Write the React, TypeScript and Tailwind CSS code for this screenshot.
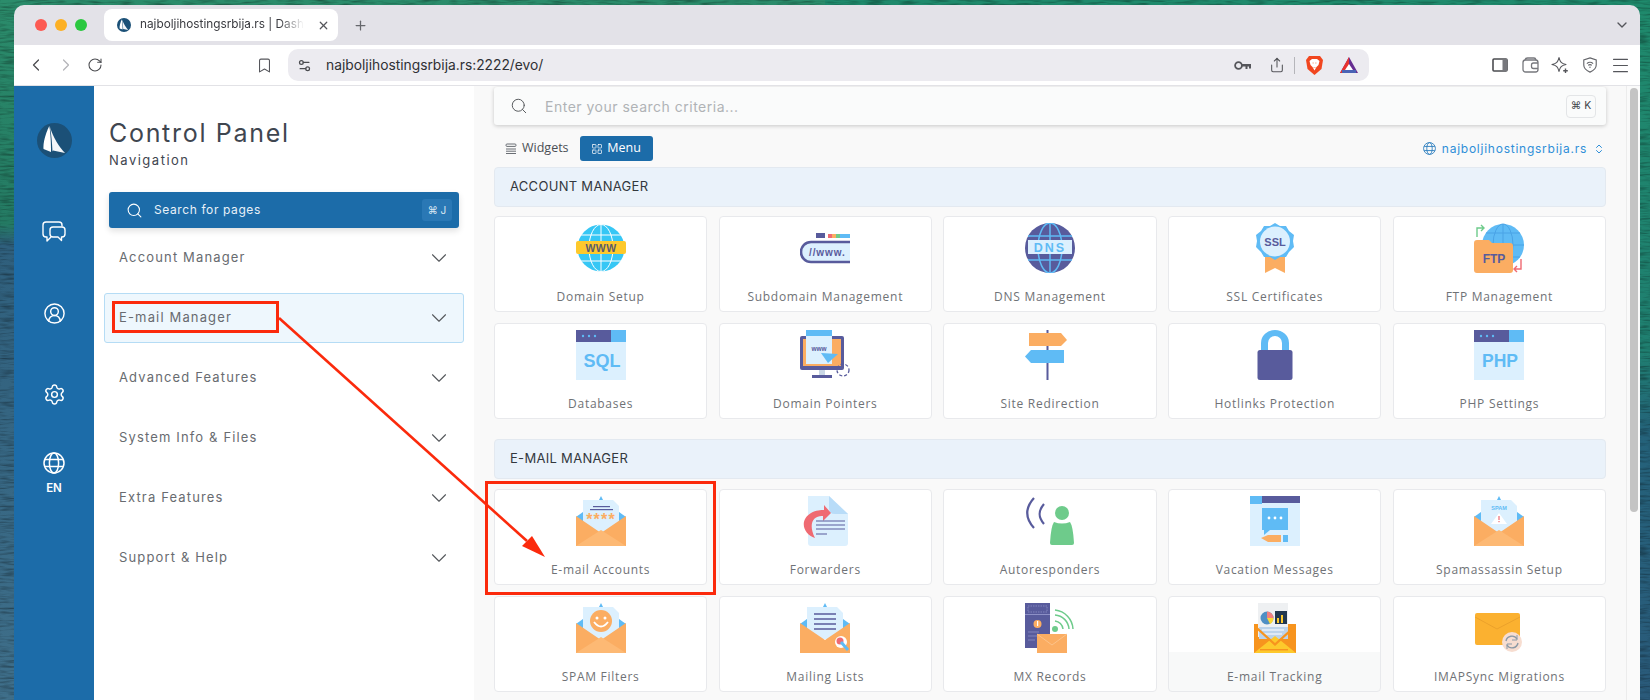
import type { ReactNode } from "react";
import {
  Bookmark,
  ChevronDown,
  ChevronLeft,
  ChevronRight,
  ChevronsUpDown,
  CircleUserRound,
  LayoutGrid,
  Menu,
  Plus,
  RotateCw,
  Search,
  Settings,
  Settings2,
  Share,
  X,
} from "lucide-react";

const MONT = "font-['Inter','Noto_Sans',sans-serif]";
const OPEN = "font-['Open_Sans','Noto_Sans',sans-serif]";

const BLUE = "#5fbbf5";
const PURPLE = "#585b9c";
const ORANGE = "#fbad62";
const PALE = "#dcf0fe";

function Svg({ children, w = 50 }: { children: ReactNode; w?: number }) {
  return (
    <svg width={w} height={50} viewBox={`0 0 ${w} 50`} className="block">
      {children}
    </svg>
  );
}

function SailLogo({ size }: { size: number }) {
  return (
    <svg width={size} height={size} viewBox="0 0 35 35" className="block">
      <circle cx="17.5" cy="17.5" r="17.5" fill="#1b5077" />
      <path d="M12.3 3 C8 12 6 20 6.5 26 L14 29 C14 20 13.5 10 12.3 3Z" fill="#fff" />
      <path d="M13 4 C16 14 22 24 28 30 L16 27.5 L15.5 28.5 C15 20 14.5 12 13 4Z" fill="#f4f6f9" />
    </svg>
  );
}

function WorldIcon({ size, className }: { size: number; className?: string }) {
  return (
    <svg width={size} height={size} viewBox="0 0 22 22" fill="none" stroke="currentColor" strokeWidth="1.5" className={className}>
      <circle cx="11" cy="11" r="10" />
      <ellipse cx="11" cy="11" rx="4.6" ry="10" />
      <path d="M2 7.5 H20 M2 14.5 H20" />
    </svg>
  );
}

function ChatIcon() {
  return (
    <svg width="24" height="22" viewBox="0 0 24 22" fill="none" stroke="#fff" strokeWidth="1.4" strokeLinejoin="round" className="mt-[63px]">
      <path d="M20 5.5 V4 Q20 1 17 1 H4 Q1 1 1 4 V13 Q1 16 4 16 H5 V20 L9 16" />
      <path d="M11 6 H20 Q23 6 23 9 V13 Q23 16 20 16 H19.5 V19.5 L16 16 H11 Q8 16 8 13 V9 Q8 6 11 6Z" />
    </svg>
  );
}

function Envelope({ children, flap = ORANGE }: { children: ReactNode; flap?: string }) {
  return (
    <Svg>
      <path d="M0 21 L25 3 L50 21 L50 30 L0 30Z" fill={BLUE} />
      <path d="M7 4 L37 4 L43 10 L43 36 L7 36Z" fill={PALE} />
      <path d="M23 4 L25 0 L27 4Z" fill={BLUE} />
      {children}
      <path d="M0 20 L25 37 L50 20 L50 50 L0 50Z" fill={flap} />
      <path d="M0 50 L25 34 L50 50Z" fill="#fdb974" />
    </Svg>
  );
}

function WindowIcon({ label, size }: { label: string; size: number }) {
  return (
    <Svg>
      <rect y="0" width="50" height="50" fill={PALE} />
      <rect y="0" width="35" height="12" fill={PURPLE} />
      <rect x="35" y="0" width="15" height="12" fill={BLUE} />
      <circle cx="7" cy="6" r="1.2" fill={BLUE} />
      <circle cx="13" cy="6" r="1.2" fill={BLUE} />
      <circle cx="19" cy="6" r="1.2" fill={BLUE} />
      <text x="26" y="37" textAnchor="middle" fontSize={size} fontWeight="700" fill={BLUE} fontFamily="'Liberation Sans', sans-serif">
        {label}
      </text>
    </Svg>
  );
}

const DomainIcon = () => (
  <Svg>
    <circle cx="25" cy="25" r="23.5" fill="#36c7f5" />
    <path d="M5 12 H45 M5 38 H45 M25 2 V48" stroke="#fff" strokeWidth="1" />
    <ellipse cx="25" cy="25" rx="12" ry="23.5" fill="none" stroke="#fff" strokeWidth="1" />
    <rect x="0" y="18" width="50" height="13" rx="2" fill="#fdc92c" />
    <text x="25" y="28.5" textAnchor="middle" fontSize="10.5" fontWeight="700" fill="#585b6c" letterSpacing="0.5" fontFamily="'Liberation Sans', sans-serif">WWW</text>
  </Svg>
);

const SubdomainIcon = () => (
  <Svg>
    <rect x="16" y="10" width="9" height="5" fill={PURPLE} />
    <rect x="28" y="11" width="4" height="4" fill="#ef6a72" />
    <rect x="32" y="11" width="4" height="4" fill={ORANGE} />
    <rect x="36" y="11" width="4" height="4" fill="#6ecb8b" />
    <rect x="40" y="11" width="10" height="4" fill={BLUE} />
    <path d="M50 19 H11 A10 10 0 0 0 11 39 H50" fill={PALE} stroke={PURPLE} strokeWidth="2.6" />
    <text x="9" y="33" fontSize="10" fontWeight="700" fill={PURPLE} letterSpacing="0.9" fontFamily="'Liberation Sans', sans-serif">//www.</text>
  </Svg>
);

const DnsIcon = () => (
  <Svg>
    <circle cx="25" cy="25" r="25" fill={PURPLE} />
    <path d="M3 13 H47 M3 37 H47 M25 1 V49" stroke={BLUE} strokeWidth="1.5" />
    <ellipse cx="25" cy="25" rx="12" ry="25" fill="none" stroke={BLUE} strokeWidth="1.5" />
    <rect x="3" y="17" width="44" height="14" fill={PALE} />
    <text x="25" y="29" textAnchor="middle" fontSize="12.5" fontWeight="700" fill={BLUE} letterSpacing="2" fontFamily="'Liberation Sans', sans-serif">DNS</text>
  </Svg>
);

const SslIcon = () => (
  <Svg>
    <path d="M15 32 H35 V50 L25 45 L15 50Z" fill={ORANGE} />
    <path d="M25 0 L30 3 L36 3 L39 8 L44 12 L43 18 L44 24 L39 29 L36 34 L30 34 L25 37 L20 34 L14 34 L11 29 L6 24 L7 18 L6 12 L11 8 L14 3 L20 3Z" fill={BLUE} />
    <circle cx="25" cy="18.5" r="15" fill={PALE} />
    <text x="25" y="23" textAnchor="middle" fontSize="11" fontWeight="700" fill={PURPLE} fontFamily="'Liberation Sans', sans-serif">SSL</text>
  </Svg>
);

const FtpIcon = () => (
  <Svg>
    <circle cx="29" cy="22" r="21" fill={BLUE} />
    <path d="M8 22 H50 M29 1 V43 M12 10 H46 M12 34 H46" stroke="#4aa3e6" strokeWidth="1" />
    <ellipse cx="29" cy="22" rx="10" ry="21" fill="none" stroke="#4aa3e6" strokeWidth="1" />
    <path d="M0 20 Q0 17 3 17 H15 L18 20 H36 Q39 20 39 23 V47 Q39 50 36 50 H3 Q0 50 0 47Z" fill={ORANGE} />
    <text x="20" y="40" textAnchor="middle" fontSize="12" fontWeight="700" fill={PURPLE} fontFamily="'Liberation Sans', sans-serif">FTP</text>
    <path d="M3 14 V5 H9 M7 2 L10 5 L7 8" fill="none" stroke="#6ecb8b" strokeWidth="1.4" />
    <path d="M47 36 V46 H41 M43 43 L40 46 L43 49" fill="none" stroke="#ef6a72" strokeWidth="1.4" />
  </Svg>
);

const PointersIcon = () => (
  <Svg>
    <rect x="0" y="6" width="44" height="34" rx="2" fill={PURPLE} />
    <rect x="3" y="9" width="38" height="27" fill={ORANGE} />
    <rect x="6" y="0" width="26" height="34" fill={PALE} />
    <rect x="6" y="0" width="26" height="6" fill={BLUE} />
    <text x="19" y="21" textAnchor="middle" fontSize="6.5" fontWeight="700" fill={PURPLE} fontFamily="'Liberation Sans', sans-serif">www</text>
    <path d="M21 23 L38 24 L28 33Z" fill={BLUE} />
    <rect x="19" y="40" width="6" height="5" fill="#c9d7e6" />
    <rect x="12" y="45" width="20" height="3" fill={PURPLE} />
    <circle cx="43" cy="40" r="6" fill="none" stroke={PURPLE} strokeWidth="1.3" strokeDasharray="3 2" />
  </Svg>
);

const SignIcon = () => (
  <Svg>
    <rect x="21.5" y="0" width="2" height="50" fill={PURPLE} />
    <path d="M4 3 H36 L42 10 L36 16 H4Z" fill={ORANGE} />
    <path d="M6 20 H39 V33 H6 L0 26.5Z" fill={BLUE} />
  </Svg>
);

const LockIcon = () => (
  <Svg>
    <path d="M11 22 V13 A14 13 0 0 1 39 13 V22 H32 V13 A7 7 0 0 0 18 13 V22Z" fill={BLUE} />
    <rect x="7.5" y="20" width="35" height="30" rx="2.5" fill={PURPLE} />
  </Svg>
);

const EmailAccountsIcon = () => (
  <Envelope>
    <rect x="17" y="10" width="17" height="1.2" fill={PURPLE} />
    <rect x="14" y="13" width="23" height="1.2" fill={PURPLE} />
    <text x="25" y="29" textAnchor="middle" fontSize="16" fontWeight="700" fill={ORANGE} letterSpacing="1.2" fontFamily="'Liberation Sans', sans-serif">****</text>
  </Envelope>
);

const ForwardersIcon = () => (
  <Svg w={48}>
    <path d="M7 0 H28 L47 18 V47 Q47 50 44 50 H10 Q7 50 7 47Z" fill={PALE} />
    <path d="M28 0 L47 18 H34 Q28 18 28 12Z" fill="#b8dcf8" />
    <path d="M14 42 C2 38 -2 24 10 17 C15 14 20 14 23 14 V9 L30 17 L22 25 V20 C14 19 6 26 14 42Z" fill="#ef6a72" />
    <path d="M15 25 H44 M15 29 H44 M15 33 H44 M15 38 H26" stroke={PURPLE} strokeWidth="1.2" />
  </Svg>
);

const AutoresponderIcon = () => (
  <Svg>
    <path d="M9 32 C0 22 0 12 9 2" fill="none" stroke={PURPLE} strokeWidth="2.2" />
    <path d="M19 28 C13 21 13 15 19 8" fill="none" stroke={PURPLE} strokeWidth="2.2" />
    <circle cx="37" cy="17" r="7" fill="#6ecb8b" />
    <path d="M29 26 Q37 29 45 26 Q48 30 49 47 Q49 49 47 49 H27 Q25 49 25 47 Q26 30 29 26Z" fill="#6ecb8b" />
  </Svg>
);

const VacationIcon = () => (
  <Svg>
    <rect width="50" height="50" fill={PALE} />
    <rect width="12" height="8" fill={BLUE} />
    <rect x="12" width="38" height="7" fill={PURPLE} />
    <rect x="12" y="12" width="26" height="22" fill={BLUE} />
    <path d="M14 34 H20 L14 39Z" fill={BLUE} />
    <circle cx="19" cy="22" r="1.4" fill="#fff" />
    <circle cx="25" cy="22" r="1.4" fill="#fff" />
    <circle cx="31" cy="22" r="1.4" fill="#fff" />
    <path d="M11 42 L18 39 H31 V46 H18Z" fill={ORANGE} />
    <rect x="33" y="39" width="5" height="7" fill={BLUE} />
  </Svg>
);

const SpamIcon = () => (
  <Envelope>
    <text x="25" y="14" textAnchor="middle" fontSize="5.5" fontWeight="700" fill={BLUE} fontFamily="'Liberation Sans', sans-serif">SPAM</text>
    <path d="M25 17 L33 28 H17Z" fill="#fff" />
    <rect x="24.4" y="20" width="1.2" height="4" fill="#ef6a72" />
    <rect x="24.4" y="25" width="1.2" height="1.2" fill="#ef6a72" />
  </Envelope>
);

const SmileIcon = () => (
  <Envelope>
    <circle cx="25" cy="18" r="11" fill={ORANGE} />
    <circle cx="21" cy="15" r="1.5" fill="#fff" />
    <circle cx="29" cy="15" r="1.5" fill="#fff" />
    <path d="M18 19 Q25 28 32 19" fill="none" stroke="#fff" strokeWidth="1.8" />
  </Envelope>
);

const MailingIcon = () => (
  <Svg>
    <path d="M0 21 L25 3 L50 21 L50 30 L0 30Z" fill={BLUE} />
    <path d="M7 4 L37 4 L43 10 L43 36 L7 36Z" fill={PALE} />
    <path d="M23 4 L25 0 L27 4Z" fill={BLUE} />
    <path d="M14 11 H36 M14 16 H36 M14 21 H36 M14 26 H36" stroke={PURPLE} strokeWidth="1.3" />
    <path d="M0 20 L25 37 L50 20 L50 50 L0 50Z" fill={ORANGE} />
    <circle cx="41" cy="39" r="6" fill="#fff" />
    <circle cx="40" cy="38" r="3.5" fill="#ef6a72" />
    <path d="M41 39 L48 47" stroke={BLUE} strokeWidth="3" />
  </Svg>
);

const MxIcon = () => (
  <Svg>
    <rect x="0" y="0" width="25" height="45" fill={PURPLE} />
    <rect x="3" y="3" width="19" height="6" fill="none" stroke="#8d90c6" strokeWidth="0.8" strokeDasharray="1.5 1" />
    <rect x="0" y="11" width="25" height="1" fill="#8d90c6" />
    <circle cx="12.5" cy="21" r="4" fill={ORANGE} />
    <rect x="12" y="18" width="1.2" height="5" fill="#fff" />
    <path d="M3 29 H14 M3 33 H18 M3 37 H10" stroke="#8d90c6" strokeWidth="0.8" />
    <circle cx="30" cy="26" r="3" fill="#6ecb8b" />
    <path d="M30 18 A9 9 0 0 1 38 26 M30 12 A15 15 0 0 1 44 26 M30 7 A20 20 0 0 1 48 26" fill="none" stroke="#6ecb8b" strokeWidth="1.5" />
    <rect x="12" y="31" width="30" height="19" fill={ORANGE} />
    <path d="M12 31 L27 42 L42 31" fill="none" stroke="#fdc38a" strokeWidth="1" />
  </Svg>
);

const TrackingIcon = () => (
  <Svg>
    <path d="M4 21 H46 V50 H4Z" fill="#f7941e" />
    <path d="M8 0 H38 V34 H8Z" fill="#eef0f2" />
    <circle cx="17" cy="15" r="6.5" fill="#4f8fc4" />
    <path d="M17 15 V8.5 A6.5 6.5 0 0 1 23.5 15Z" fill="#f2807f" />
    <path d="M17 15 H23.5 A6.5 6.5 0 0 1 20 21Z" fill="#fdd835" />
    <rect x="25" y="8" width="12" height="13" fill="#22384f" />
    <rect x="27" y="15" width="2" height="5" fill="#fdc92c" />
    <rect x="31" y="12" width="2" height="8" fill="#fdc92c" />
    <rect x="9" y="24" width="29" height="12" fill="#bcd3ea" />
    <path d="M12 27 H34 M14 31 H32" stroke="#fff" strokeWidth="1.2" />
    <path d="M4 50 L25 33 L46 50Z" fill="#fdc92c" />
    <path d="M4 21 L25 40 L46 21 V24 L25 43 L4 24Z" fill="#f7941e" />
    <rect x="10" y="46" width="28" height="1.4" fill="#f7941e" />
  </Svg>
);

const ImapIcon = () => (
  <Svg>
    <rect x="1" y="10" width="45" height="32" rx="2" fill="#fbb130" />
    <path d="M1 14 L23 26 L46 14" fill="none" stroke="#e79d2a" strokeWidth="0.8" />
    <circle cx="38" cy="39" r="10" fill="#f7ddd0" />
    <path d="M32 38 A6 6 0 0 1 43 36 M44 40 A6 6 0 0 1 33 42" fill="none" stroke="#8b99a6" strokeWidth="1.4" />
    <path d="M43 32 V37 H38 M33 46 V41 H38" fill="none" stroke="#8b99a6" strokeWidth="1" />
  </Svg>
);

const SqlIcon = () => <WindowIcon label="SQL" size={18} />;
const PhpIcon = () => <WindowIcon label="PHP" size={17.5} />;

type Tile = { label: string; icon: () => ReactNode; tracking?: boolean };

const accountTiles: Tile[] = [
  { label: "Domain Setup", icon: DomainIcon },
  { label: "Subdomain Management", icon: SubdomainIcon },
  { label: "DNS Management", icon: DnsIcon },
  { label: "SSL Certificates", icon: SslIcon },
  { label: "FTP Management", icon: FtpIcon },
  { label: "Databases", icon: SqlIcon },
  { label: "Domain Pointers", icon: PointersIcon },
  { label: "Site Redirection", icon: SignIcon },
  { label: "Hotlinks Protection", icon: LockIcon },
  { label: "PHP Settings", icon: PhpIcon },
];

const emailTiles: Tile[] = [
  { label: "E-mail Accounts", icon: EmailAccountsIcon },
  { label: "Forwarders", icon: ForwardersIcon },
  { label: "Autoresponders", icon: AutoresponderIcon },
  { label: "Vacation Messages", icon: VacationIcon },
  { label: "Spamassassin Setup", icon: SpamIcon },
  { label: "SPAM Filters", icon: SmileIcon },
  { label: "Mailing Lists", icon: MailingIcon },
  { label: "MX Records", icon: MxIcon },
  { label: "E-mail Tracking", icon: TrackingIcon, tracking: true },
  { label: "IMAPSync Migrations", icon: ImapIcon },
];

const navItems = ["Account Manager", "E-mail Manager", "Advanced Features", "System Info & Files", "Extra Features", "Support & Help"];

function TileGrid({ tiles, gapClass }: { tiles: Tile[]; gapClass: string }) {
  return (
    <div className={`grid grid-cols-5 gap-x-[11.5px] ${gapClass}`}>
      {tiles.map((t) => {
        const Icon = t.icon;
        return (
          <div
            key={t.label}
            className={`flex h-[96px] flex-col items-center rounded-[4px] border border-[#e8e9ec] pt-[6px] ${
              t.tracking ? "bg-[linear-gradient(#fff_0,#fff_58%,#f8f9f9_58%)]" : "bg-white"
            }`}
          >
            <Icon />
            <span className={`mt-[16px] text-[12px] leading-[16px] tracking-[0.72px] text-[#6f7276] ${OPEN}`}>{t.label}</span>
          </div>
        );
      })}
    </div>
  );
}

function SectionHeader({ title }: { title: string }) {
  return (
    <div className={`flex h-[40px] items-center rounded-[4px] border border-[#e3e9f0] bg-[#eaf2fa] pl-[15px] text-[13px] tracking-[0.3px] text-[#33383e] ${MONT}`}>
      {title}
    </div>
  );
}

function ToolbarSlot({ children }: { children: ReactNode }) {
  return <span className="flex w-[30px] shrink-0 justify-center text-[#55565b]">{children}</span>;
}

function Browser() {
  return (
    <>
      <div className="flex h-[40px] shrink-0 items-center bg-[#e3e2e8] pl-[21px] pr-[10px]">
        <div className="flex items-center gap-[8px]">
          <span className="size-[12px] rounded-full bg-[#fc5a52]" />
          <span className="size-[12px] rounded-full bg-[#fcb024]" />
          <span className="size-[12px] rounded-full bg-[#2bc840]" />
        </div>
        <div className="ml-[17px] flex h-[32px] w-[234px] items-center rounded-[8px] bg-white pl-[13px] pr-[8px]">
          <SailLogo size={14} />
          <span className="ml-[9px] whitespace-nowrap text-[11.8px] text-[#3a3b40] [mask-image:linear-gradient(90deg,#000_85%,transparent)] font-['Inter',sans-serif]">
            najboljihostingsrbija.rs | Dash
          </span>
          <X size={13} strokeWidth={2.2} className="ml-auto text-[#55565b]" />
        </div>
        <Plus size={15} className="ml-[15px] text-[#66676c]" />
        <ChevronDown size={16} className="ml-auto text-[#55565b]" />
      </div>

      <div className="flex h-[41px] shrink-0 items-center border-b border-[#e2e2e6] bg-white">
        <ChevronLeft size={20} strokeWidth={1.5} className="ml-[12px] text-[#4b4c50]" />
        <ChevronRight size={20} strokeWidth={1.5} className="ml-[10px] text-[#b4b5b9]" />
        <RotateCw size={16} strokeWidth={1.6} className="ml-[11px] text-[#4b4c50]" />
        <Bookmark size={17} strokeWidth={1.5} className="ml-[153px] text-[#55565b]" />
        <div className="ml-[15px] flex h-[32px] w-[1081px] items-center rounded-[10px] bg-[#ecebf0] pl-[9px]">
          <Settings2 size={15} className="text-[#4b4c50]" />
          <span className="ml-[14px] text-[13.8px] text-[#2f3034] font-['Inter',sans-serif]">najboljihostingsrbija.rs:2222/evo/</span>
          <svg width="17" height="11" viewBox="0 0 17 11" className="ml-auto">
            <circle cx="4.5" cy="5.5" r="3.4" fill="none" stroke="#55565b" strokeWidth="1.8" />
            <path d="M8 4 H17 V8.5 H15 V6.5 H13.5 V9 H11.5 V6.5 H8Z" fill="#55565b" />
          </svg>
          <Share size={16} strokeWidth={1.6} className="ml-[18px] text-[#55565b]" />
          <span className="ml-[9px] h-[17px] w-px bg-[#b5b5ba]" />
          <svg width="17" height="19" viewBox="0 0 17 19" className="ml-[11px]">
            <path d="M3 0 H14 L17 4 L15.5 13 L8.5 19 L1.5 13 L0 4Z" fill="#f1461f" />
            <path d="M3.5 5 L6 3 H11 L13.5 5 L12.5 9 L10.5 11 L8.5 14.5 L6.5 11 L4.5 9Z" fill="#fff" />
            <path d="M6.5 7 H7.8 M9.2 7 H10.5 M7.5 11 L8.5 12 L9.5 11" stroke="#f8a27e" strokeWidth="1" fill="none" />
          </svg>
          <svg width="18" height="16" viewBox="0 0 18 16" className="ml-[17px]">
            <path d="M9 0 L18 16 H0Z" fill="#662d91" />
            <path d="M9 0 L0 16 H5 L9 8Z" fill="#e8332e" />
            <path d="M9 7 L13 13 H5Z" fill="#fff" />
            <rect x="2" y="13" width="14" height="3" fill="#4a63b5" />
          </svg>
          <span className="w-[11px]" />
        </div>
        <span className="w-[116px] shrink-0" />
        <ToolbarSlot>
          <svg width="16" height="14" viewBox="0 0 16 14">
            <rect x="1" y="1" width="14" height="12" rx="1" fill="none" stroke="#4b4c50" strokeWidth="1.6" />
            <rect x="10.5" y="1" width="4.5" height="12" fill="#77787d" />
          </svg>
        </ToolbarSlot>
        <ToolbarSlot>
          <svg width="17" height="16" viewBox="0 0 17 16" fill="none" stroke="#77787d" strokeWidth="1.3">
            <rect x="1" y="3" width="15" height="12" rx="2.5" />
            <path d="M3 3 Q3.5 1 5.5 1 H12 Q13.5 1 14 3" />
            <path d="M16 6 H11.5 Q9.5 6 9.5 8 V9.5 Q9.5 11.5 11.5 11.5 H16" />
          </svg>
        </ToolbarSlot>
        <ToolbarSlot>
          <svg width="18" height="18" viewBox="0 0 18 18" fill="none" stroke="#55565b" strokeWidth="1.1" strokeLinejoin="round">
            <path d="M8 1.5 C9 6 10.5 7.5 15 8.5 C10.5 9.5 9 11 8 15.5 C7 11 5.5 9.5 1 8.5 C5.5 7.5 7 6 8 1.5Z" />
            <path d="M14.5 12.5 V17 M12.2 14.7 H16.8" strokeWidth="1.4" />
          </svg>
        </ToolbarSlot>
        <ToolbarSlot>
          <svg width="16" height="18" viewBox="0 0 18 18" fill="none" stroke="#66676c" strokeWidth="1.3">
            <path d="M9 1 L16 3.2 V9 C16 13 12.5 15.5 9 17 C5.5 15.5 2 13 2 9 V3.2Z" />
            <path d="M5.5 7.5 A5 5 0 0 1 12.5 7.5 M7 9.5 A2.8 2.8 0 0 1 11 9.5" />
            <circle cx="9" cy="11.5" r="0.8" fill="#66676c" stroke="none" />
          </svg>
        </ToolbarSlot>
        <ToolbarSlot>
          <Menu size={21} strokeWidth={1.2} />
        </ToolbarSlot>
      </div>
    </>
  );
}

function Rail() {
  return (
    <div className="flex w-[80px] shrink-0 flex-col items-center bg-[#1c6ca9] pt-[37px] text-white">
      <SailLogo size={35} />
      <ChatIcon />
      <CircleUserRound size={23} strokeWidth={1.5} className="mt-[59px]" />
      <Settings size={23} strokeWidth={1.5} className="mt-[58px]" />
      <WorldIcon size={22} className="mt-[46px]" />
      <span className={`mt-[6px] text-[11.5px] font-semibold ${MONT}`}>EN</span>
    </div>
  );
}

function Nav() {
  return (
    <div className={`flex w-[380px] shrink-0 flex-col bg-white pl-[15px] pr-[15px] ${MONT}`}>
      <h1 className="mt-[30px] text-[25px] font-normal leading-[34px] tracking-[1.7px] text-[#3f4650]">Control Panel</h1>
      <p className="text-[13px] leading-[20px] tracking-[1.5px] text-[#3f4650]">Navigation</p>
      <div className="mt-[22px] flex h-[36px] items-center rounded-[3px] bg-[#1c6ca9] pl-[17px] pr-[7px] text-white shadow-[0_3px_6px_rgba(0,0,0,0.12)]">
        <Search size={17} strokeWidth={1.5} />
        <span className="ml-[11px] text-[12px] tracking-[0.6px] text-[#e8f1f8]">Search for pages</span>
        <span className="ml-auto flex h-[22px] w-[30px] items-center justify-center rounded-[3px] bg-[#2a78b5] text-[10px] text-[#dbe9f4]">⌘ J</span>
      </div>
      <div className="-mx-[5px] mt-[5px] flex flex-col gap-[10px]">
        {navItems.map((n) => (
          <div
            key={n}
            className={`flex h-[50px] items-center rounded-[3px] border pl-[14px] pr-[11px] ${
              n === "E-mail Manager" ? "border-[#b5dcf5] bg-[#eef7fd]" : "border-transparent"
            }`}
          >
            <span className="text-[13px] tracking-[1.15px] text-[#686b70]">{n}</span>
            <ChevronDown size={26} strokeWidth={1} className="ml-auto text-[#55585c]" />
          </div>
        ))}
      </div>
    </div>
  );
}

function Main() {
  return (
    <div className="min-w-0 flex-1 overflow-hidden bg-[#f9f9f9] pl-[20px] pr-[20px] pt-[1px]">
      <div className={`flex h-[38px] items-center rounded-[3px] bg-[#fafbfb] pl-[16px] pr-[10px] shadow-[0_1px_4px_rgba(0,0,0,0.2)] ${MONT}`}>
        <Search size={18} strokeWidth={1.3} className="text-[#55585c]" />
        <span className="ml-[17px] text-[14px] tracking-[0.5px] text-[#b0b3b6]">Enter your search criteria...</span>
        <span className="ml-auto flex h-[23px] w-[30px] items-center justify-center rounded-[4px] border border-[#e3e5e7] text-[10.5px] text-[#44474b]">⌘ K</span>
      </div>
      <div className={`mt-[11px] flex h-[25px] items-center text-[12.5px] font-medium ${OPEN}`}>
        <span className="ml-[11px] flex items-center gap-[5px] text-[#4a4e54]">
          <svg width="12" height="12" viewBox="0 0 12 12" fill="none" stroke="#6a6e74" strokeWidth="1">
            <rect x="1" y="1" width="10" height="2.4" rx="1" />
            <path d="M1 6 H11 M1 8.2 H11 M1 10.5 H11" />
          </svg>
          Widgets
        </span>
        <span className="ml-[11px] flex h-[25px] w-[73px] items-center justify-center gap-[4px] rounded-[3px] bg-[#1c6ca9] text-white">
          <LayoutGrid size={12} strokeWidth={1.4} />
          Menu
        </span>
        <span className={`ml-auto flex items-center pr-[1px] text-[12px] font-normal tracking-[0.75px] text-[#2f8fd8] ${MONT}`}>
          <WorldIcon size={13} className="mr-[6px] text-[#2a7dbd]" />
          najboljihostingsrbija.rs
          <ChevronsUpDown size={12} className="ml-[6px]" />
        </span>
      </div>
      <div className="mt-[6px]">
        <SectionHeader title="ACCOUNT MANAGER" />
      </div>
      <div className="mt-[9px]">
        <TileGrid tiles={accountTiles} gapClass="gap-y-[11px]" />
      </div>
      <div className="mt-[20px]">
        <SectionHeader title="E-MAIL MANAGER" />
      </div>
      <div className="mt-[10px]">
        <TileGrid tiles={emailTiles} gapClass="gap-y-[11px]" />
      </div>
    </div>
  );
}

function Wallpaper() {
  return (
    <svg className="absolute left-0 top-0" width="1650" height="700" viewBox="0 0 1650 700">
      <defs>
        <linearGradient id="wallLeft" x1="0" y1="0" x2="0" y2="1">
          <stop offset="0" stopColor="#2b8c6b" />
          <stop offset="0.32" stopColor="#247a63" />
          <stop offset="0.35" stopColor="#2f5f7c" />
          <stop offset="1" stopColor="#3f6f8a" />
        </linearGradient>
        <linearGradient id="wallRight" x1="0" y1="0" x2="0" y2="1">
          <stop offset="0" stopColor="#1f8a6c" />
          <stop offset="0.5" stopColor="#1f7f70" />
          <stop offset="0.62" stopColor="#24627a" />
          <stop offset="1" stopColor="#2a5a7a" />
        </linearGradient>
        <filter id="waves" x="0" y="0" width="100%" height="100%">
          <feTurbulence type="fractalNoise" baseFrequency="0.06 0.5" numOctaves="2" seed="4" />
          <feColorMatrix values="0 0 0 0 0  0 0 0 0 0  0 0 0 0 0  0 0 0 2.2 -0.95" />
        </filter>
      </defs>
      <rect width="825" height="700" fill="url(#wallLeft)" />
      <rect x="825" width="825" height="700" fill="url(#wallRight)" />
      <rect width="1650" height="700" filter="url(#waves)" opacity="0.35" />
    </svg>
  );
}

export default function App() {
  return (
    <div className="relative h-[700px] w-[1650px] overflow-hidden pl-[14px] pr-[10px] pt-[5px]">
      <Wallpaper />
      <div className="relative flex h-[695px] flex-col overflow-hidden rounded-t-[10px]">
        <Browser />
        <div className="flex min-h-0 flex-1">
          <Rail />
          <Nav />
          <Main />
          <div className="w-[14px] shrink-0 border-l border-[#ececec] bg-[#fafafa] pl-[3px] pt-[2px]">
            <div className="h-[424px] w-[8px] rounded-full bg-[#c4c4c4]" />
          </div>
        </div>
      </div>

      {/* annotations drawn over the page */}
      <div className="absolute left-[112px] top-[301px] h-[32px] w-[167px] border-[3px] border-[#fb2a0c]" />
      <div className="absolute left-[485px] top-[481px] h-[114px] w-[231px] border-[3px] border-[#fb2a0c]" />
      <svg className="absolute left-0 top-0" width="1650" height="700" viewBox="0 0 1650 700">
        <path d="M279 318 L527 541" stroke="#fb2a0c" strokeWidth="2.6" />
        <path d="M545 557 L532 536 L522 546Z" fill="#fb2a0c" />
      </svg>
    </div>
  );
}
